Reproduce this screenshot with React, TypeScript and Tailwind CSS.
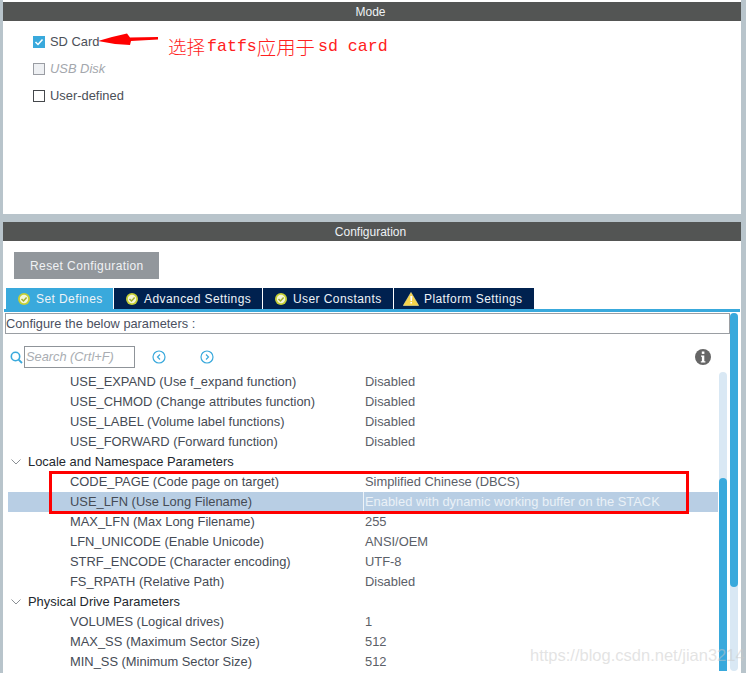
const UI_FONT = "font-['Liberation_Sans',Arial,sans-serif]";

interface Row {
  name?: string;
  value?: string;
  section?: string;
  selected?: boolean;
}

const ROWS: Row[] = [
  { name: 'USE_EXPAND (Use f_expand function)', value: 'Disabled' },
  { name: 'USE_CHMOD (Change attributes function)', value: 'Disabled' },
  { name: 'USE_LABEL (Volume label functions)', value: 'Disabled' },
  { name: 'USE_FORWARD (Forward function)', value: 'Disabled' },
  { section: 'Locale and Namespace Parameters' },
  { name: 'CODE_PAGE (Code page on target)', value: 'Simplified Chinese (DBCS)' },
  { name: 'USE_LFN (Use Long Filename)', value: 'Enabled with dynamic working buffer on the STACK', selected: true },
  { name: 'MAX_LFN (Max Long Filename)', value: '255' },
  { name: 'LFN_UNICODE (Enable Unicode)', value: 'ANSI/OEM' },
  { name: 'STRF_ENCODE (Character encoding)', value: 'UTF-8' },
  { name: 'FS_RPATH (Relative Path)', value: 'Disabled' },
  { section: 'Physical Drive Parameters' },
  { name: 'VOLUMES (Logical drives)', value: '1' },
  { name: 'MAX_SS (Maximum Sector Size)', value: '512' },
  { name: 'MIN_SS (Minimum Sector Size)', value: '512' },
];

function PanelHeader({ title }: { title: string }) {
  return (
    <div className="h-[19px] bg-[#535554] flex items-center justify-center pr-[3px] text-[12px] text-[#eef2f5]">
      {title}
    </div>
  );
}

function OkIcon() {
  return (
    <svg width="12" height="12" viewBox="0 0 12 12" className="shrink-0">
      <circle cx="6" cy="6" r="6" fill="#c5cf35" />
      <circle cx="6" cy="6" r="4.2" fill="#f4f6d8" />
      <path d="M3.5 6 L5.5 8 L8.6 4.6" fill="none" stroke="#a3ae2e" strokeWidth="1.5" />
    </svg>
  );
}

function WarnIcon() {
  return (
    <svg width="16" height="14" viewBox="0 0 16 14" className="shrink-0">
      <path d="M8 0.5 L15.7 13.5 L0.3 13.5 Z" fill="#f6d44a" stroke="#f9e58a" strokeWidth="0.6" />
      <path d="M7.3 4 L9.4 4 L8.9 9 L7.6 9 Z M7.4 10 L9 10 L9 11.6 L7.4 11.6 Z" fill="#ffffff" />
    </svg>
  );
}

function Tab({ label, active, warn, width }: { label: string; active?: boolean; warn?: boolean; width: string }) {
  return (
    <div
      className={`${width} h-[21px] flex items-center text-[12px] tracking-[0.42px] text-[#eef3f7] ${
        warn ? 'gap-[5px] pl-[9px]' : 'gap-[6px] pl-3'
      } ${active ? 'bg-[#39a9dc]' : 'bg-[#00214f]'}`}
    >
      {warn ? <WarnIcon /> : <OkIcon />}
      <span>{label}</span>
    </div>
  );
}

function CircleArrow({ left }: { left?: boolean }) {
  return (
    <svg width="14" height="14" viewBox="0 0 14 14" className="shrink-0">
      <circle cx="7" cy="7" r="6" fill="none" stroke="#39a9dc" strokeWidth="1.2" />
      <path d={left ? 'M8 4.5 L5.5 7 L8 9.5' : 'M6 4.5 L8.5 7 L6 9.5'} fill="none" stroke="#39a9dc" strokeWidth="1.2" />
    </svg>
  );
}

function SearchIcon() {
  return (
    <svg width="13" height="13" viewBox="0 0 13 13" className="shrink-0">
      <circle cx="5.5" cy="5.5" r="4.2" fill="none" stroke="#39a9dc" strokeWidth="1.6" />
      <path d="M8.6 8.6 L12 12" stroke="#39a9dc" strokeWidth="1.8" />
    </svg>
  );
}

function Checkbox({ label, state }: { label: string; state: 'on' | 'off' | 'disabled' }) {
  return (
    <div className="h-[13px] flex items-center gap-[5px] text-[12.9px]">
      {state === 'on' && (
        <div className="w-3 h-3 bg-[#39a9dc] flex items-center justify-center">
          <svg width="10" height="10" viewBox="0 0 10 10">
            <path d="M1.5 5 L4 7.5 L8.5 2.5" fill="none" stroke="#ffffff" strokeWidth="1.5" />
          </svg>
        </div>
      )}
      {state === 'off' && <div className="w-3 h-3 border border-[#45484c]" />}
      {state === 'disabled' && <div className="w-3 h-3 border border-[#9a9da3] bg-[#eef0f3]" />}
      <span className={state === 'disabled' ? 'italic text-[#a3a7ad]' : 'text-[#4b5058]'}>{label}</span>
    </div>
  );
}

function ParamRow({ row }: { row: Row }) {
  if (row.section) {
    return (
      <div className="h-5 flex items-center text-[12.9px] text-[#23282e]">
        <svg width="10" height="6" viewBox="0 0 10 6" className="ml-[3px] mr-[7px] shrink-0">
          <path d="M0.5 0.5 L5 5 L9.5 0.5" fill="none" stroke="#8b9095" strokeWidth="1" />
        </svg>
        {row.section}
      </div>
    );
  }
  return (
    <div className={`h-5 flex items-center text-[12.9px] ${row.selected ? 'bg-[#b8cee4]' : ''}`}>
      <div className="w-[355px] h-full flex items-center pl-[62px] text-[#454b55]">{row.name}</div>
      <div
        className={`flex-1 h-full flex items-center pl-px border-l ${
          row.selected ? 'text-[#eaf1f7] border-[#eef3f8]' : 'text-[#5b6068] border-transparent'
        }`}
      >
        {row.value}
      </div>
    </div>
  );
}

export default function App() {
  return (
    <div className={`relative w-[746px] h-[673px] overflow-hidden bg-[#b8c4cb] pl-[3px] pr-[5px] ${UI_FONT}`}>
      <div className="h-full flex flex-col bg-white pt-[2px]">
        {/* Mode panel */}
        <PanelHeader title="Mode" />
        <div className="h-[193px] flex flex-col gap-[14px] pt-[14px] pl-[30px]">
          <Checkbox label="SD Card" state="on" />
          <Checkbox label="USB Disk" state="disabled" />
          <Checkbox label="User-defined" state="off" />
        </div>
        <div className="h-2 bg-[#b8c4cb] shrink-0" />

        {/* Configuration panel */}
        <PanelHeader title="Configuration" />
        <div className="pt-[11px] pl-[11px]">
          <div className="w-[145px] h-[27px] bg-[#92979c] flex items-center pl-4 text-[12px] tracking-[0.4px] text-[#f0f2f4]">
            Reset Configuration
          </div>
        </div>
        <div className="mt-[9px] ml-[3px] flex gap-px">
          <Tab label="Set Defines" active width="w-[107px]" />
          <Tab label="Advanced Settings" width="w-[148px]" />
          <Tab label="User Constants" width="w-[130px]" />
          <Tab label="Platform Settings" warn width="w-[140px]" />
        </div>
        <div className="h-[3px] ml-[1px] mr-[1px] bg-[#39a9dc] shrink-0" />

        <div className="flex-1 min-h-0 flex pl-[2px] pr-[3px] pb-[2px]">
          <div className="flex-1 min-w-0 flex flex-col">
            <div className="h-[21px] mt-[1px] border border-[#9a9ea3] flex items-center text-[12.8px] text-[#4a5060]">
              Configure the below parameters :
            </div>
            <div className="flex-1 min-h-0 flex">
              <div className="flex-1 min-w-0 flex flex-col pl-[3px] pr-px">
                <div className="h-[38px] pt-2 flex items-center shrink-0 pl-[2px]">
                  <SearchIcon />
                  <div className="ml-[1px] w-[111px] h-[22px] border border-[#8f9499] flex items-center pl-px text-[12.8px] italic text-[#a9adb2]">
                    Search (Crtl+F)
                  </div>
                  <div className="ml-[17px]">
                    <CircleArrow left />
                  </div>
                  <div className="ml-[34px]">
                    <CircleArrow />
                  </div>
                  <div className="ml-auto mr-[7px] w-4 h-4 rounded-full bg-[#666666] flex items-center justify-center">
                    <svg width="6" height="12" viewBox="0 0 6 12">
                      <rect x="1.8" y="0.5" width="2.6" height="2.4" fill="#ffffff" />
                      <path d="M1 4.5 H4.3 V10.2 H5.4 V11.5 H0.8 V10.2 H1.9 V5.8 H1 Z" fill="#ffffff" />
                    </svg>
                  </div>
                </div>
                <div className="flex-1 min-h-0 overflow-hidden">
                  {ROWS.map((row, i) => (
                    <ParamRow key={i} row={row} />
                  ))}
                </div>
              </div>
              {/* inner scrollbar */}
              <div className="w-2 mt-[38px] rounded-t bg-[#d9e8f4] flex flex-col">
                <div className="mt-[106px] flex-1 rounded-t bg-[#39a9dc]" />
              </div>
              <div className="w-[3px]" />
            </div>
          </div>
          {/* outer scrollbar */}
          <div className="w-2 mt-[1px] rounded-t bg-[#d9e8f4] rounded-b flex flex-col">
            <div className="h-[274px] rounded bg-[#39a9dc]" />
          </div>
        </div>
      </div>

      {/* annotations pasted over the screenshot */}
      <svg width="70" height="20" viewBox="0 0 70 20" className="absolute left-[95px] top-[30px]">
        <path d="M3 11 L17 7 L32 3.5 L35 7.5 L63 7 L63 9.5 L36 11 L35 15 L20 14 Z" fill="#ff0000" />
      </svg>
      <div className="absolute left-[168px] top-[34px] flex items-center h-[26px] text-[#ff2020] whitespace-nowrap font-['Liberation_Mono',monospace] text-[16.6px]">
        <span className="font-['Noto_Sans_CJK_SC',sans-serif] text-[18.5px] font-light">选择</span>
        <span className="ml-[2px]">fatfs</span>
        <span className="font-['Noto_Sans_CJK_SC',sans-serif] text-[19.4px] font-light">应用于</span>
        <span className="ml-[3px]">sd card</span>
      </div>
      <div className="absolute left-[49px] top-[471px] w-[640px] h-[43px] border-[3px] border-[#ff0000]" />
      <div className="absolute left-[530px] top-[643px] text-[16.5px] text-[#c8c8c8]/50 font-['Liberation_Sans',sans-serif] whitespace-nowrap">
        https://blog.csdn.net/jian3214
      </div>
    </div>
  );
}
